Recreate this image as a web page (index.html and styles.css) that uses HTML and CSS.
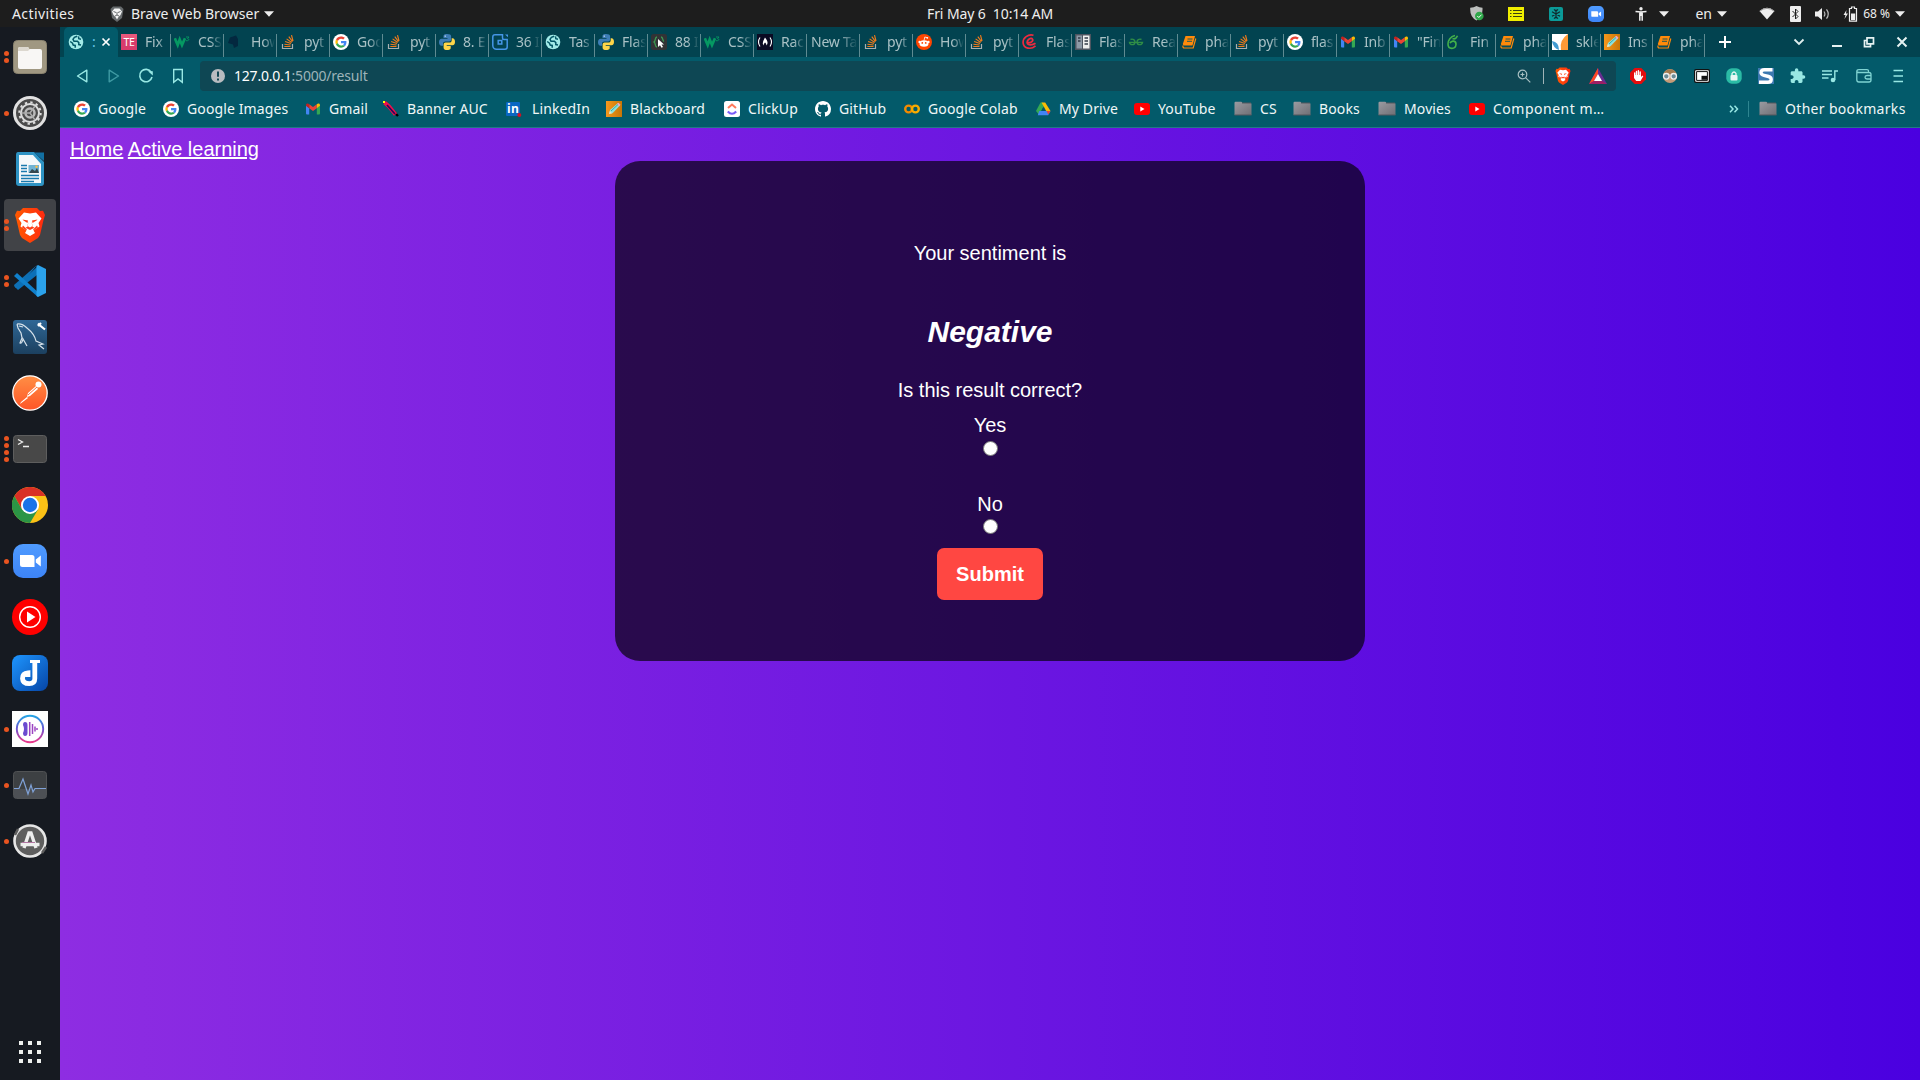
FILE: index.html
```html
<!DOCTYPE html>
<html lang="en">
<head>
<meta charset="utf-8">
<title>Sentiment result</title>
<link rel="stylesheet" href="styles.css">
</head>
<body>
<svg class="sprite" aria-hidden="true">
  <defs>
    <linearGradient id="gBrave" x1="0" x2="1"><stop offset="0" stop-color="#ff5a00"/><stop offset="1" stop-color="#ff2a10"/></linearGradient>
    <linearGradient id="gZoom" x1="0" x2="0" y1="0" y2="1"><stop offset="0" stop-color="#4f9bff"/><stop offset="1" stop-color="#3d84f7"/></linearGradient>
    <linearGradient id="gPost" x1="0" x2="0" y1="0" y2="1"><stop offset="0" stop-color="#ff8f45"/><stop offset="1" stop-color="#ff5527"/></linearGradient>
    <linearGradient id="gJop" x1="0" x2="1" y1="0" y2="1"><stop offset="0" stop-color="#1e96ff"/><stop offset="1" stop-color="#0645a6"/></linearGradient>
    <linearGradient id="gSql" x1="0" x2="0" y1="0" y2="1"><stop offset="0" stop-color="#2f6796"/><stop offset="1" stop-color="#1c405f"/></linearGradient>
    <linearGradient id="gWave" x1="0" x2="0" y1="0" y2="1"><stop offset="0" stop-color="#25a5e5"/><stop offset=".5" stop-color="#6b52d0"/><stop offset="1" stop-color="#ea3a8c"/></linearGradient>
    <linearGradient id="gFolder" x1="0" x2="1" y1="0" y2="1"><stop offset="0" stop-color="#9b9ba1"/><stop offset="1" stop-color="#6f6f75"/></linearGradient>
    <linearGradient id="gPencil" x1="0" x2="1"><stop offset="0" stop-color="#f7981d"/><stop offset="1" stop-color="#c87606"/></linearGradient>
  </defs>
  <symbol id="globe" viewBox="0 0 16 16"><circle cx="8" cy="8" r="7.3" fill="#a3ebe8"/><path d="M2.2 7.5 4.5 9.2 5.2 11l2 .4v2.400" fill="none" stroke="#035766" stroke-width="1.5"/><path d="M9.2 2.2 6.4 3.4 5 5.3 6 7.3h3.4l1.400 1.300v2l2.200.4M10.500 2.400l.3 2.200 2.200.6" fill="none" stroke="#035766" stroke-width="1.500"/></symbol>
  <symbol id="google" viewBox="0 0 16 16"><circle cx="8" cy="8" r="8" fill="#fff"/><g transform="translate(2.400 2.400) scale(.235)"><path fill="#EA4335" d="M24 9.5c3.54 0 6.71 1.22 9.21 3.6l6.85-6.85C35.9 2.38 30.47 0 24 0 14.62 0 6.51 5.38 2.56 13.22l7.98 6.19C12.43 13.72 17.74 9.5 24 9.5z"/><path fill="#4285F4" d="M46.98 24.55c0-1.57-.15-3.09-.38-4.55H24v9.02h12.94c-.58 2.96-2.26 5.48-4.78 7.18l7.73 6c4.51-4.18 7.09-10.36 7.09-17.65z"/><path fill="#FBBC05" d="M10.53 28.59c-.48-1.45-.76-2.99-.76-4.59s.27-3.14.76-4.59l-7.98-6.19C.92 16.46 0 20.12 0 24c0 3.88.92 7.54 2.56 10.78l7.97-6.19z"/><path fill="#34A853" d="M24 48c6.48 0 11.93-2.13 15.89-5.81l-7.73-6c-2.15 1.45-4.92 2.3-8.16 2.3-6.26 0-11.57-4.22-13.47-9.91l-7.98 6.19C6.51 42.62 14.62 48 24 48z"/></g></symbol>
  <symbol id="te" viewBox="0 0 16 16"><path fill="#d93c6c" d="M0 0h16v16H0z"/><path fill="#e8577c" d="M0 0h16v5H0z"/><text x="8" y="12.2" text-anchor="middle" class="te-text">TE</text></symbol>
  <symbol id="w3" viewBox="0 0 16 16"><path d="M.8 4.200 3.700 11 5.700 5.500 8 11l3-6.800" fill="none" stroke="#059862" stroke-width="2.700"/><path d="M12 3h3l-1.500 1.700c2 0 1.800 2.500-1.500 2" fill="none" stroke="#059862" stroke-width=".9"/></symbol>
  <symbol id="darkbook" viewBox="0 0 16 16"><path d="M3 3.500 9 1.500 11 5 11 12 7 14 6 10.500 1 9z" fill="#03283f"/></symbol>
  <symbol id="so" viewBox="0 0 16 16"><path d="M2.500 10v4.500h10V10" fill="none" stroke="#a7afb1" stroke-width="1.200"/><path d="M4.300 12.500h6.200M4.400 10.200l6.200.8M5.100 7.500l5.900 2M6.600 4.900l5.100 3.600M8.800 2.700l3.700 5M11.500 1.200l1.500 5.800" stroke="#ef7b1c" stroke-width="1.150"/></symbol>
  <symbol id="py" viewBox="0 0 16 16"><path fill="#3d7db5" d="M8 0C4.800 0 4.500 1.300 4.500 2.300V4h4v.7H2.600C1 4.700 0 6 0 8.200c0 2.300 1 3.500 2.500 3.500H4V9.800c0-1.400 1-2.300 2.400-2.300h3.700c1.100 0 2-.9 2-2V2.300C12.100.8 10.700 0 8 0z"/><path fill="#ffd548" d="M8.200 16c3.200 0 3.500-1.300 3.500-2.300V12h-4v-.7h5.900c1.600 0 2.400-1.300 2.400-3.500 0-2.300-1-3.500-2.400-3.500h-.9v1.900c0 1.400-1 2.300-2.400 2.300H6.600c-1.100 0-2 .9-2 2v3.200c0 1.500 1.200 2.300 3.600 2.300z"/><circle cx="6.200" cy="2.100" r=".7" fill="#fff"/></symbol>
  <symbol id="bluesq" viewBox="0 0 16 16"><path d="M10.500.8H3A2.200 2.200 0 0 0 .8 3v8.500A3.700 3.700 0 0 0 4.500 15.200H13a2.200 2.200 0 0 0 2.200-2.200V5.500H12A1.500 1.500 0 0 1 10.500 4zM6.200 6.500h3.600v3.600H6.200z" fill="none" stroke="#4596e6" stroke-width="1.500"/><path d="M13 .5h3v2.700z" fill="#4596e6"/></symbol>
  <symbol id="brace" viewBox="0 0 16 16"><rect width="16" height="16" rx="2.500" fill="#333335"/><path d="M6 3C3.500 3 5 7 3 8c2 1 .5 5 3 5M10 3c2.500 0 1 3.500 3 4.500" fill="none" stroke="#3d9b52" stroke-width="1.300"/><path d="M7 5v8l2-1.800 1.500 2.600 1.500-.8-1.500-2.500h2.500z" fill="#fff"/></symbol>
  <symbol id="fcc" viewBox="0 0 16 16"><path fill="#0a0a23" d="M0 0h16v16H0z"/><path d="M3 3.500q-3 4.500 0 9M13 3.500q3 4.500 0 9" fill="none" stroke="#fff" stroke-width="1.100"/><path d="M8 3.500c2.500 3 3.400 5.500 1.600 8-.3-1.300-.7-2.300-1.600-3-.8.800-1.400 1.800-1.500 3C4.800 9 6.500 6.500 8 3.500z" fill="#fff"/></symbol>
  <symbol id="reddit" viewBox="0 0 16 16"><circle cx="8" cy="8" r="8" fill="#ff4500"/><ellipse cx="8" cy="9.500" rx="4.500" ry="3.200" fill="#fff"/><circle cx="3.600" cy="7.900" r="1.200" fill="#fff"/><circle cx="12.400" cy="7.900" r="1.200" fill="#fff"/><path d="M8 6.500 8.800 3l2.300.6" fill="none" stroke="#fff" stroke-width=".8"/><circle cx="11.300" cy="3.800" r=".9" fill="#fff"/><circle cx="6.300" cy="8.900" r=".9" fill="#ff4500"/><circle cx="9.700" cy="8.900" r=".9" fill="#ff4500"/></symbol>
  <symbol id="redc" viewBox="0 0 16 16"><path d="M5 8.500c3.500.8 6.500-1.300 5.600-3.200C9.300 3 4.600 5.500 5.200 9c.7 2.500 5.300 2.300 8.300.2M11.500 1.300C6-.3.800 4 1.100 8.800c.6 6 8 7 12.400 3" fill="none" stroke="#ed2b3f" stroke-width="1.700"/></symbol>
  <symbol id="servers" viewBox="0 0 16 16"><path fill="#4d5560" d="M0 0h16v16H0z"/><path fill="#8d99a6" d="M1.500 1.500h5.500v13H1.500z"/><path fill="#eee" d="M8 1.500h6.500v13H8z"/><path d="M9.500 4h3.500M9.500 7h3.500M9.500 10h3.500M3 4h2.500M3 7h2.500" stroke="#333c48" stroke-width="1.400"/></symbol>
  <symbol id="gfg" viewBox="0 0 16 16"><path d="M2.500 5.500C5 4.500 7 6 7 8.300c-.4 3-5 3.200-5.500.1h13c-.5 3.100-5.100 2.900-5.500-.1 0-2.300 2-3.800 4.500-2.800" fill="none" stroke="#2f8d46" stroke-width="1.400"/></symbol>
  <symbol id="book" viewBox="0 0 16 16"><path d="M4.500 2h9.500L11.500 11.500H2.500L1.800 10z" fill="#ff8a0a"/><path d="M6.500 5h5M6 7.300h5M3 12.600h8.800" stroke="#04515f" stroke-width=".9"/><path d="M2 11.500q-.5 2.500 1.500 2.500h8.700l2.600-9.500" fill="none" stroke="#ff8a0a" stroke-width="1.200"/></symbol>
  <symbol id="gmail" viewBox="0 0 16 16"><path fill="#4285f4" d="M1 4.500 4.200 7v6.500H2q-1 0-1-1z"/><path fill="#34a853" d="M11.800 7 15 4.500v8q0 1-1 1h-2.200z"/><path fill="#ea4335" d="M4.200 3.200 8 6.100l3.800-2.900v4L8 10.100 4.200 7.200z"/><path fill="#c5221f" d="M1 4.200C1 2.500 2.700 2 4.200 3.200v4L1 4.800z"/><path fill="#fbbc04" d="M15 4.200c0-1.700-1.700-2.200-3.200-1v4L15 4.800z"/></symbol>
  <symbol id="leaf" viewBox="0 0 16 16"><path d="M9 1.500C4.500 2.500 2 6.500 2 10c0 6 7.500 5.500 8 .5C10.200 6.500 5.500 6 4 9.200M6.500 4.500c2 .8 3.800 0 5-2.800" fill="none" stroke="#43b04a" stroke-width="1.600"/></symbol>
  <symbol id="skl" viewBox="0 0 16 16"><path fill="#fff" d="M0 0h16v16H0z"/><path d="M16 0v16H9Q7 6 16 0z" fill="#ff9a36"/><path d="M0 7q7 1 7 9Q1 14 0 7z" fill="#3f9bd2"/></symbol>
  <symbol id="pencil" viewBox="0 0 16 16"><path fill="url(#gPencil)" d="M0 0h16v16H0z"/><path d="m3 13 1-4 8-7 2.200 2.300-7.700 8z" fill="#8de2dc"/><path d="m3 13 .8-3 2.200 2.200z" fill="#f7e3c0"/><path d="m11 3 1.500-1.300 2 2L13 5.300z" fill="#f7a0b8"/><path d="m5 10 7-6.500" stroke="#37a9ae"/></symbol>
  <symbol id="banner" viewBox="0 0 16 16"><path d="m1 1 14 14" stroke="#000" stroke-width="2.400"/><path d="m1.500 1.500 4.500 4 6.500 8" fill="none" stroke="#f0104a" stroke-width="4"/><path d="m4 4 8 9" stroke="#28085f" stroke-width="1.700"/><path fill="#ff0" d="M0 0h2v2H0z"/></symbol>
  <symbol id="linkedin" viewBox="0 0 16 16"><rect y="1" width="14" height="14" rx="1" fill="#0a66c2"/><text x="7" y="12" text-anchor="middle" class="in-text">in</text><circle cx="13.300" cy="14" r="2" fill="#d11124"/></symbol>
  <symbol id="clickup" viewBox="0 0 16 16"><rect width="16" height="16" rx="2.500" fill="#fff"/><path d="m4 7 4-3.500L12 7" fill="none" stroke="#ff7a5c" stroke-width="2"/><path d="M3.800 10.500q4.200 4.500 8.400 0" fill="none" stroke="#7a5cf8" stroke-width="2.100"/></symbol>
  <symbol id="github" viewBox="0 0 16 16"><path fill="#fff" d="M8 0C3.580 0 0 3.580 0 8c0 3.540 2.290 6.530 5.470 7.590.4.070.55-.17.55-.38 0-.19-.01-.82-.01-1.490-2.010.37-2.530-.49-2.690-.94-.09-.23-.48-.94-.82-1.130-.28-.15-.68-.52-.01-.53.63-.01 1.080.58 1.230.82.72 1.210 1.870.87 2.330.66.070-.52.28-.87.51-1.070-1.780-.2-3.640-.89-3.640-3.950 0-.87.31-1.590.82-2.150-.08-.2-.36-1.020.08-2.120 0 0 .67-.21 2.200.82.64-.18 1.320-.27 2-.27s1.360.09 2 .27c1.530-1.040 2.200-.82 2.200-.82.44 1.100.16 1.920.08 2.120.51.56.82 1.270.82 2.150 0 3.070-1.870 3.750-3.650 3.950.29.25.54.73.54 1.480 0 1.070-.01 1.930-.01 2.200 0 .21.15.46.55.38A8.010 8.010 0 0 0 16 8c0-4.420-3.580-8-8-8z"/></symbol>
  <symbol id="colab" viewBox="0 0 16 16"><circle cx="4.600" cy="8" r="3.400" fill="none" stroke="#f28a00" stroke-width="2.400"/><circle cx="11.400" cy="8" r="3.400" fill="none" stroke="#f9ab00" stroke-width="2.400"/></symbol>
  <symbol id="drive" viewBox="0 0 16 16"><path fill="#34a853" d="M5.500 1.500h2.700L9.500 4 4.200 14 1 10z"/><path fill="#fbbc04" d="M6.500 1.500h3.700L15.500 10h-4.300z"/><path fill="#4285f4" d="M4.200 10h11.300l-2.300 4.300H2.800z"/><path fill="#035766" d="m8 6.500 1.900 3.500H6.200z"/><path fill="#ea4335" d="M11.500 10h4l-2.200 3.500z"/></symbol>
  <symbol id="yt" viewBox="0 0 16 16"><rect y="2" width="16" height="12" rx="3" fill="#f00"/><path d="m6.300 5.500 4.200 2.500-4.200 2.500z" fill="#fff"/></symbol>
  <symbol id="folder" viewBox="0 0 18 16"><path d="M.5 2q0-1.300 1-1.300H7q1 0 1.300 1.300h8q1.200 0 1.200 1v11H.5z" fill="url(#gFolder)"/><path d="M.5 14h17M8 2h9" stroke="#55565d" fill="none"/></symbol>
  <symbol id="lion" viewBox="0 0 30 36"><path d="M8 1h14l3 3 3-.3L30 8l-1.500 5L25 28l-2 3-8 5-8-5-2-3L1.500 13 0 8l2-4.300L5 4z" fill="url(#gBrave)"/><path d="M15 6.500 21 5.500 26.500 11.500 23.500 16 24.500 19.500 18.500 23.500 20 26 15 29 10 26 11.500 23.500 5.500 19.500 6.500 16 3.500 11.500 9 5.500z" fill="#fff"/><path d="m7.500 12.500 5.500 1-.5 2.500-4-2.500zM22.500 12.500l-5.500 1 .5 2.500 4-2.500zM13.500 14l-1 5L15 20.500l2.500-1.500-1-5 .8 5.500 2.200 1.200L15 23l-4.500-2.300 2.200-1.200zM8 18.500l4 4-1 .8L7 20.500zM22 18.500l-4 4 1 .8 4-2.800z" fill="#ff4018"/></symbol>
  <symbol id="zoomapp" viewBox="0 0 34 34"><rect width="34" height="34" rx="10" fill="url(#gZoom)"/><path d="M7 11h12q2.500 0 2.500 2.500V23h-12Q7 23 7 20.500zM22.800 15.500l5-4v11l-5-4z" fill="#fff"/></symbol>
  <symbol id="caret" viewBox="0 0 10 6"><path d="M0 .3h10L5 5.700z" fill="#eee"/></symbol>
</svg>

<header class="topbar">
  <span class="activities">Activities</span>
  <svg class="app-icon" viewBox="0 0 14 16"><path d="M3 .5h8L13.500 3 12 12l-5 4-5-4L.5 3z" fill="#666a6c"/><path d="M4.500 2.500h5L12 5.500 10.500 9 8.500 11 7 13.500 5.500 11 3.500 9 2 5.500z" fill="#f4f4f4"/><path d="m3.500 5.500 2.500 1M10.500 5.500l-2.500 1M7 6v3M5 10l2-1 2 1" stroke="#666a6c" fill="none"/></svg>
  <span class="app-name">Brave Web Browser</span>
  <svg class="caret"><use href="#caret"/></svg>
  <time class="clock">Fri May 6&nbsp; 10:14 AM</time>
  <div class="tray">
    <svg width="14" height="16" viewBox="0 0 14 16"><path d="M6.500 0q3 1.800 6 1.800.5 9.500-6 12.700Q-.3 11.300.2 1.800 4 1.800 6.500 0z" fill="#bcbfbd"/><circle cx="9.300" cy="10" r="4.300" fill="#2fa84a"/><path d="m7.300 10 1.500 1.500 2.700-2.800" stroke="#fff" fill="none"/></svg>
    <svg width="16" height="14" viewBox="0 0 16 14"><path fill="#f0ee00" d="M0 0h16v14H0z"/><path d="M2 3.500h1.500M5 3.500h9M2 6.500h1.500M5 6.500h9M2 9.500h1.500M5 9.500h9" stroke="#3c3c10"/></svg>
    <svg width="14" height="14" viewBox="0 0 14 14"><rect width="14" height="14" rx="2" fill="#0b9a98"/><path d="M7 2.500v9M3 4.700l8 4.600M3 9.300l8-4.600M5 2.300l2 2 2-2M5 11.700l2-2 2 2" stroke="#10272b" stroke-width="1.100" fill="none"/></svg>
    <svg width="16" height="16"><use href="#zoomapp"/></svg>
    <svg width="12" height="14" viewBox="0 0 12 14"><circle cx="6" cy="1.700" r="1.700" fill="#eee"/><path d="M.5 4.500 6 5l5.500-.5M4.800 4.500v9.300M7.200 4.500v9.300M6 4.500V9" stroke="#eee" stroke-width="1.500" fill="none"/></svg>
    <svg width="10" height="6"><use href="#caret"/></svg>
    <span>en</span>
    <svg width="10" height="6"><use href="#caret"/></svg>
    <svg width="16" height="13" viewBox="0 0 16 13"><path d="M.5 4Q8-2.500 15.500 4L8 12.500z" fill="#eee"/><path d="M.8 4.200Q8-1.500 15.200 4.200" stroke="#999" fill="none"/></svg>
    <svg width="11" height="16" viewBox="0 0 11 16"><rect width="11" height="16" rx="1" fill="#eee"/><path d="m2.500 5 5.500 5.500-2.500 2.500V3L8 5.500 2.500 11" stroke="#1d1d1d" fill="none"/></svg>
    <svg width="15" height="14" viewBox="0 0 15 14"><path d="M0 4.500h3l4-3.500v12L3 9.500H0z" fill="#eee"/><path d="M9 4.500q1.800 2.500 0 5M11.500 2.300q3.500 4.700 0 9.400" stroke="#bbb" fill="none" stroke-width="1.200"/></svg>
    <svg width="15" height="16" viewBox="0 0 15 16"><path d="M3.500 4 .5 9h2L1.500 13 5 7.500H3z" fill="#eee"/><path d="M6.500 2.500h2V1h3v1.500h2v12.700h-7z" fill="none" stroke="#eee" stroke-width="1.200"/><path d="M8 7.500h4.200V14H8z" fill="#eee"/></svg>
    <span class="percent">68 %</span>
    <svg width="10" height="6"><use href="#caret"/></svg>
  </div>
</header>

<div class="desktop">
  <nav class="dock">
    <div class="dock-item"><span class="dots"><i></i><i></i></span>
      <svg viewBox="0 0 36 36"><rect x="1.500" y="1.500" width="33" height="33" rx="4" fill="#a09882" stroke="#8a836f"/><path d="M6 10q0-2 2-2h7q2 0 2 2h11q2 0 2 2v16q0 2-2 2H8q-2 0-2-2z" fill="#f8f7f5"/><path d="M6 12h10l2-2-1-.300Q17 8 15 8H8Q6 8 6 10z" fill="#dcd8cf"/></svg></div>
    <div class="dock-item"><span class="dots"><i></i></span>
      <svg viewBox="0 0 36 36"><circle cx="18" cy="18" r="15.500" fill="#4b4b4b" stroke="#e1e1e1" stroke-width="3"/><circle cx="18" cy="18" r="9" fill="none" stroke="#ddd" stroke-width="2"/><circle cx="18" cy="18" r="10.700" fill="none" stroke="#ddd" stroke-width="2" stroke-dasharray="2.400 3.200"/><circle cx="18" cy="18" r="4.500" fill="none" stroke="#bbb" stroke-width="2.500"/><path d="M18 18H9.500M18 18l5-7M18 18l5 7" stroke="#aaa" stroke-width="1.500"/></svg></div>
    <div class="dock-item">
      <svg viewBox="0 0 36 36"><path d="M6 1h16l10 10v21q0 3-3 3H7q-3 0-3-3V4q0-3 2-3z" fill="#2e93c4"/><path d="M7 4h14l8 9v19H7z" fill="#f4f8fa"/><path d="M22 1.500h10V10z" fill="#1270a3"/><path d="M9 14.500h6M9 17.500h6M9 20.500h6M9 24.500h18M9 27.500h18M9 30.500h13" stroke="#197aae" stroke-width="1.300"/><path d="M16.500 14h10.500v8H16.500z" fill="#70b3d3"/><path d="m17 22 3-4 3 2 2-3 2 5z" fill="#35474f"/><circle cx="24.500" cy="15.800" r="1.200" fill="#ffbd42"/></svg></div>
    <div class="dock-item active"><span class="dots"><i></i><i></i></span>
      <svg viewBox="0 0 30 36"><use href="#lion"/></svg></div>
    <div class="dock-item"><span class="dots"><i></i><i></i></span>
      <svg viewBox="0 0 36 36"><path d="m3 24 3 3 19-15V4z" fill="#0b70b8"/><path d="m25 2-9 11L4 25q-2-1-2-3L25 2z" fill="#0f6fb3"/><path d="m5 10 22 20-1 4L2 13z" fill="#1080cc"/><path d="m26 2 8 4v24l-8 4-1.500-1V3z" fill="#2ba2ec"/></svg></div>
    <div class="dock-item">
      <svg viewBox="0 0 36 36"><rect x="1" y="1" width="34" height="34" rx="3" fill="url(#gSql)"/><path d="M5 5q5-1 10 4c5 4 8 8 9 13l7 3-4 1 5 4M5 5l1 4 3 5 1 5-2 5q2 1 3-4l4 7M7 7l4 1" fill="none" stroke="#d7e2ea" stroke-width="1.200"/><path d="m26 4.500 2 2 5 4M26 7l3-3" fill="none" stroke="#fff" stroke-width="2.200"/></svg></div>
    <div class="dock-item">
      <svg viewBox="0 0 36 36"><circle cx="18" cy="18" r="17.200" fill="url(#gPost)" stroke="#fff" stroke-width="1.300"/><circle cx="26.500" cy="9.500" r="3" fill="#fff"/><path d="m24 11-8 7-1 4 3-1 8-7zM15 22l-6 5-1 2 8-6" fill="#fff"/><path d="m16 20 9-8" stroke="#ff7038"/></svg></div>
    <div class="dock-item"><span class="dots"><i></i><i></i><i></i><i></i></span>
      <svg viewBox="0 0 36 36"><rect x="1.500" y="4.500" width="33" height="27" rx="3" fill="#484848" stroke="#5e5e5e"/><path d="m6 8.500 4.500 2.500L6 13.500M11 15.500h6" fill="none" stroke="#eee" stroke-width="1.300"/></svg></div>
    <div class="dock-item">
      <svg viewBox="0 0 36 36"><circle cx="18" cy="18" r="18" fill="#fbc116"/><path d="M2.400 9A18 18 0 0 1 33.600 9H18l-8 13.500z" fill="#d93025"/><path d="M2.400 9A18 18 0 0 0 18 36l8-13.500H10z" fill="#2b9545"/><circle cx="18" cy="18" r="9" fill="#fff"/><circle cx="18" cy="18" r="7.200" fill="#1a73e8"/></svg></div>
    <div class="dock-item"><span class="dots"><i></i></span>
      <svg viewBox="-1 -1 36 36"><use href="#zoomapp" width="34" height="34"/></svg></div>
    <div class="dock-item">
      <svg viewBox="0 0 36 36"><circle cx="18" cy="18" r="18" fill="#f00"/><circle cx="18" cy="18" r="10.300" fill="none" stroke="#fff" stroke-width="1.400"/><path d="m15 12.500 8.500 5.500-8.500 5.500z" fill="#fff"/></svg></div>
    <div class="dock-item">
      <svg viewBox="0 0 36 36"><rect width="36" height="36" rx="8" fill="url(#gJop)"/><path d="M18 6.500h10" stroke="#fff" stroke-width="3"/><path d="M22.800 6v17.500q0 5.200-5.500 5.200-6.500 0-6.800-5.200 0-5 5.500-5.500v4" fill="none" stroke="#fff" stroke-width="4.800"/></svg></div>
    <div class="dock-item"><span class="dots"><i></i></span>
      <svg viewBox="0 0 36 36"><path fill="#fff" d="M0 0h36v36H0z"/><circle cx="18" cy="18" r="13.200" fill="none" stroke="url(#gWave)" stroke-width="1.900"/><path d="M13 11q2.500 0 2.500 3v8q0 3-2.500 3-2 0-2-3 2-4 0-8 0-3 2-3z" fill="#6b4bd0"/><path d="M17.700 11v14M20.500 13v10M23 15.500v5M25 17v2" stroke="#9b45c2" stroke-width="1.500"/></svg></div>
    <div class="dock-item"><span class="dots"><i></i></span>
      <svg viewBox="0 0 36 36"><rect x="1.500" y="4.500" width="33" height="27" rx="3" fill="#3d4043" stroke="#505254"/><path d="M2 22h32v9H2z" fill="#4d5055"/><path d="M2 21.500h5l4-9.500 5 15 3-9 2 7 2-3.500h11" fill="none" stroke="#7fa1d7" stroke-width="1.200"/></svg></div>
    <div class="dock-item"><span class="dots"><i></i></span>
      <svg viewBox="0 0 36 36"><circle cx="18" cy="18" r="15.500" fill="#5e5e5e" stroke="#e6e6e6" stroke-width="2.600"/><path d="m12 25 5-15h2l5 15" fill="none" stroke="#eee" stroke-width="3.400"/><path d="M8.500 21.500h19" stroke="#eee" stroke-width="3.500"/><path d="M10 19.500h13" stroke="#b277a4"/><path d="m3 12 3-6M30 30l4-6" stroke="#5e5e5e" stroke-width="2.500"/></svg></div>
    <svg class="apps" viewBox="0 0 24 24"><path d="M1 3h4M10 3h4M19 3h4M1 12h4M10 12h4M19 12h4M1 21h4M10 21h4M19 21h4" stroke="#eef0ee" stroke-width="4"/></svg>
  </nav>

  <section class="browser">
    <div class="tabs">
      <div class="tab current"><svg><use href="#globe"/></svg><span>:</span><svg class="close" viewBox="0 0 10 10"><path d="m1.500 1.500 7 7M8.500 1.500l-7 7" stroke="#fff" stroke-width="1.700"/></svg></div>
      <div class="tab"><svg><use href="#te"/></svg><span>Fix</span></div>
      <div class="tab"><svg><use href="#w3"/></svg><span>CSS</span></div>
      <div class="tab"><svg><use href="#darkbook"/></svg><span>How</span></div>
      <div class="tab"><svg><use href="#so"/></svg><span>pyt</span></div>
      <div class="tab"><svg><use href="#google"/></svg><span>Goo</span></div>
      <div class="tab"><svg><use href="#so"/></svg><span>pyt</span></div>
      <div class="tab"><svg><use href="#py"/></svg><span>8. E</span></div>
      <div class="tab"><svg><use href="#bluesq"/></svg><span>36 I</span></div>
      <div class="tab"><svg><use href="#globe"/></svg><span>Tas</span></div>
      <div class="tab"><svg><use href="#py"/></svg><span>Flas</span></div>
      <div class="tab"><svg><use href="#brace"/></svg><span>88 I</span></div>
      <div class="tab"><svg><use href="#w3"/></svg><span>CSS</span></div>
      <div class="tab"><svg><use href="#fcc"/></svg><span>Rac</span></div>
      <div class="tab"><span class="wide">New Ta</span></div>
      <div class="tab"><svg><use href="#so"/></svg><span>pyt</span></div>
      <div class="tab"><svg><use href="#reddit"/></svg><span>How</span></div>
      <div class="tab"><svg><use href="#so"/></svg><span>pyt</span></div>
      <div class="tab"><svg><use href="#redc"/></svg><span>Flas</span></div>
      <div class="tab"><svg><use href="#servers"/></svg><span>Flas</span></div>
      <div class="tab"><svg><use href="#gfg"/></svg><span>Rea</span></div>
      <div class="tab"><svg><use href="#book"/></svg><span>pha</span></div>
      <div class="tab"><svg><use href="#so"/></svg><span>pyt</span></div>
      <div class="tab"><svg><use href="#google"/></svg><span>flas</span></div>
      <div class="tab"><svg><use href="#gmail"/></svg><span>Inb</span></div>
      <div class="tab"><svg><use href="#gmail"/></svg><span>"Fin</span></div>
      <div class="tab"><svg><use href="#leaf"/></svg><span>Fin</span></div>
      <div class="tab"><svg><use href="#book"/></svg><span>pha</span></div>
      <div class="tab narrow"><svg><use href="#skl"/></svg><span>skle</span></div>
      <div class="tab narrow"><svg><use href="#pencil"/></svg><span>Ins</span></div>
      <div class="tab narrow"><svg><use href="#book"/></svg><span>pha</span></div>
      <svg class="newtab" viewBox="0 0 12 12"><path d="M6 0v12M0 6h12" stroke="#fff" stroke-width="2"/></svg>
      <div class="controls">
        <svg viewBox="0 0 12 12"><path d="m1.500 3.500 4.500 4.500 4.500-4.500" fill="none" stroke="#e0eeee" stroke-width="1.800"/></svg>
        <svg viewBox="0 0 12 12"><path d="M1 10h10" stroke="#e6f2f2" stroke-width="2"/></svg>
        <svg viewBox="0 0 12 12"><path d="M4 1.800h6.500v6H4zM4 4.500H1.500v6.200h6V8" fill="none" stroke="#e6f2f2" stroke-width="1.700"/></svg>
        <svg viewBox="0 0 12 12"><path d="m1.500 1.500 9 9M10.500 1.500l-9 9" stroke="#e6f2f2" stroke-width="2"/></svg>
      </div>
    </div>

    <div class="toolbar">
      <div class="nav">
        <svg viewBox="0 0 16 16"><path d="M12.800 2.200v11.600L3.500 8z" fill="none" stroke="#98e8e4" stroke-width="1.400" stroke-linejoin="round"/></svg>
        <svg viewBox="0 0 16 16"><path d="M3.200 2.200v11.600L12.500 8z" fill="none" stroke="#3f9aa3" stroke-width="1.400" stroke-linejoin="round"/></svg>
        <svg viewBox="0 0 16 16"><path d="M13.200 4.200A6.200 6.200 0 1 0 14 9" fill="none" stroke="#98e8e4" stroke-width="1.600"/><path d="M10 3.200h4.800V7.500z" fill="#98e8e4"/></svg>
        <svg viewBox="0 0 16 16"><path d="M3.700 1.500h8.600v12.800L8 11l-4.300 3.300z" fill="none" stroke="#98e8e4" stroke-width="1.400"/></svg>
      </div>
      <div class="address">
        <svg width="14" height="14" viewBox="0 0 14 14"><circle cx="7" cy="7" r="7" fill="#b9bcc0"/><path d="M7 2.500v5.300M7 9.500v2" stroke="#154854" stroke-width="2"/></svg>
        <span class="url"><b>127.0.0.1</b>:5000/result</span>
        <svg class="magnify" width="14" height="14" viewBox="0 0 14 14"><circle cx="5.500" cy="5.500" r="4.300" fill="none" stroke="#a7bfc2" stroke-width="1.200"/><path d="m8.800 8.800 4.500 4.500M3.500 5.500h4M5.500 3.500v4" stroke="#a7bfc2" stroke-width="1.200"/></svg>
        <span class="bar"></span>
        <svg class="shield" width="16" height="18"><use href="#lion"/></svg>
        <svg width="18" height="16" viewBox="0 0 18 16"><path d="M9 0 18 16H0z" fill="#662d91"/><path d="M9 0v6l-4 7-5 3z" fill="#ff4724"/><path d="M0 16h18l-5-3H5z" fill="#9e1f63"/><path d="m9 6 4 7H5z" fill="#fff"/></svg>
      </div>
      <div class="extensions">
        <svg viewBox="0 0 16 16"><path d="M4.700 0h6.600L16 4.700v6.600L11.300 16H4.700L0 11.300V4.700z" fill="#e40d0d"/><path d="M4.700 7.800V5M6.500 8V3.500M8.400 8V2.800M10.200 8V4" stroke="#fff" stroke-width="1.400" stroke-linecap="round"/><path d="M4 7h7v2l1.300-1.500 1 .8L10.500 13H6.200L4 10z" fill="#fff"/></svg>
        <svg viewBox="0 0 16 16"><circle cx="8" cy="8" r="7" fill="#c59b78"/><path d="M2 4.500Q8-2 14 4.500l-2 1.500H4z" fill="#a27b50"/><circle cx="4.300" cy="8.300" r="2.800" fill="#6b8b96" stroke="#eee" stroke-width="1.300"/><circle cx="11.700" cy="8.300" r="2.800" fill="#6b8b96" stroke="#eee" stroke-width="1.300"/></svg>
        <svg viewBox="0 0 16 16"><rect y="1" width="16" height="14" rx="2" fill="#111"/><rect x="1.200" y="2.200" width="13.600" height="11.600" rx="1" fill="#fff"/><path d="M2.600 3.600h10.800v8.800H2.600z" fill="none" stroke="#111"/><path d="M7.500 7.800h5.500v4H7.500z" fill="#111"/></svg>
        <svg viewBox="0 0 16 16"><rect x=".3" y=".3" width="15.400" height="15.400" rx="5.500" fill="#2bbba5"/><rect x="4.500" y="7" width="7" height="5.500" rx="1" fill="#e9f8f5"/><path d="M6 7V5.500q2-3 4 0V7" fill="none" stroke="#e9f8f5" stroke-width="1.300"/></svg>
        <svg viewBox="0 0 16 16"><path fill="#3c78b0" d="M0 0h16v16H0z"/><path d="M14.500 1.800H6.500Q3 1.800 3 4.400 3 6.500 6 7.300l4.500 1.200q2.700.8 2.700 2.900 0 2.800-3.500 2.800H1" fill="none" stroke="#fff" stroke-width="3.400"/></svg>
        <svg viewBox="1 1 23 22"><path fill="#98e8e4" d="M20.500 11H19V7c0-1.100-.9-2-2-2h-4V3.500a2.500 2.500 0 0 0-5 0V5H4c-1.100 0-1.990.9-1.990 2v3.800H3.500c1.490 0 2.700 1.210 2.700 2.700s-1.210 2.700-2.700 2.700H2V20c0 1.100.9 2 2 2h3.800v-1.500c0-1.490 1.210-2.700 2.700-2.700s2.700 1.210 2.700 2.700V22H17c1.100 0 2-.9 2-2v-4h1.500a2.500 2.500 0 0 0 0-5z"/></svg>
        <svg viewBox="0 0 16 16"><path d="M0 3h10M0 6.500h10M0 10h6.500M12.800 12V3H16" fill="none" stroke="#98e8e4" stroke-width="1.400"/><circle cx="11" cy="12" r="2.300" fill="#98e8e4"/></svg>
        <svg viewBox="0 0 16 16"><path d="M12.500 4.500V3q0-1.300-1.500-1.300H3Q.8 1.700.8 3.500v8.300q0 2.200 2.200 2.200h10q2 0 2-2V6.500q0-2-2-2H3Q1 4.500.8 3.500M15 7.500h-4q-2 .2-2 1.700t2 1.800h4" fill="none" stroke="#7fd3d2" stroke-width="1.300"/></svg>
        <svg viewBox="0 0 16 16"><path d="M3.500 2.500h9.500M3.500 8h9.500M3.500 13.500h9.500" stroke="#98e8e4" stroke-width="1.400"/></svg>
      </div>
    </div>

    <div class="bookmarks">
      <a><svg><use href="#google"/></svg>Google</a>
      <a><svg><use href="#google"/></svg>Google Images</a>
      <a><svg><use href="#gmail"/></svg>Gmail</a>
      <a><svg><use href="#banner"/></svg>Banner AUC</a>
      <a class="linkedin"><svg><use href="#linkedin"/></svg>LinkedIn</a>
      <a><svg><use href="#pencil"/></svg>Blackboard</a>
      <a><svg><use href="#clickup"/></svg>ClickUp</a>
      <a><svg><use href="#github"/></svg>GitHub</a>
      <a><svg><use href="#colab"/></svg>Google Colab</a>
      <a><svg><use href="#drive"/></svg>My Drive</a>
      <a><svg><use href="#yt"/></svg>YouTube</a>
      <a class="dir"><svg><use href="#folder"/></svg>CS</a>
      <a class="dir"><svg><use href="#folder"/></svg>Books</a>
      <a class="dir"><svg><use href="#folder"/></svg>Movies</a>
      <a class="long"><svg><use href="#yt"/></svg>Component m…</a>
      <svg class="more" viewBox="0 0 10 8"><path d="m1 .8 3 3.200-3 3.200M5.500.8l3 3.200-3 3.200" fill="none" stroke="#98e8e4" stroke-width="1.500"/></svg>
      <a class="dir other"><svg><use href="#folder"/></svg>Other bookmarks</a>
    </div>

    <main class="page">
      <div class="links"><a href="#">Home</a> <a href="#">Active learning</a></div>
      <form class="card">
        <p class="lead">Your sentiment is</p>
        <h2>Negative</h2>
        <p class="question">Is this result correct?</p>
        <label class="yes">Yes<input type="radio" name="correct"></label>
        <label class="no">No<input type="radio" name="correct"></label>
        <button type="button">Submit</button>
      </form>
    </main>
  </section>
</div>
</body>
</html>
```
FILE: styles.css
```css
* { box-sizing: border-box; }
body { margin: 0; width: 1920px; height: 1080px; overflow: hidden; display: flex; flex-direction: column; font: 14px/20px "Noto Sans", "Open Sans", sans-serif; color: #eee; }
svg { flex: none; display: block; }
.sprite { position: absolute; width: 0; height: 0; }
.te-text { font: 10.5px "Noto Sans", sans-serif; fill: #fff; letter-spacing: -.3px; }
.in-text { font: bold 12px "Open Sans", sans-serif; fill: #fff; }

.topbar { height: 27px; flex: none; background: #1d1d1d; display: grid; grid-template-columns: 98px 33px 133px 663px 533px 1fr; align-items: center; white-space: nowrap; }
.activities { padding-left: 12px; letter-spacing: .4px; }
.app-icon { width: 14px; height: 16px; margin-left: 12px; }
.caret { width: 10px; height: 6px; }
.clock { letter-spacing: -.1px; }
.tray { display: grid; grid-template-columns: 24px 40px 39px 41px 43px 22px 43px 15px 48px 26px 29px 28px 32px 15px; justify-items: end; align-items: center; }
.percent { font-size: 12px; }

.desktop { flex: 1; display: flex; min-height: 0; }
.dock { width: 60px; background: #161a21; display: flex; flex-direction: column; align-items: center; gap: 4px; padding: 4px 0 16px; }
.dock-item { width: 52px; height: 52px; border-radius: 4px; position: relative; display: flex; align-items: center; justify-content: center; }
.dock-item > svg { width: 36px; height: 36px; }
.dock-item.active { background: #414347; }
.dots { position: absolute; left: 0; top: 0; bottom: 0; display: flex; flex-direction: column; justify-content: center; gap: 2px; }
.dots i { width: 5px; height: 5px; border-radius: 50%; background: #e95420; }
.apps { width: 24px; height: 24px; margin-top: auto; }

.browser { flex: 1; min-width: 0; display: flex; flex-direction: column; background: #035a6a; }
.tabs { height: 30px; flex: none; background: #024350; display: flex; align-items: center; padding-left: 4px; }
.tab { width: 53px; height: 30px; flex: none; padding: 0 2px 0 3px; display: flex; align-items: center; gap: 8px; color: #a9c1c5; background: linear-gradient(#5f8b92, #5f8b92) right bottom / 1px 23px no-repeat; }
.tab svg { width: 16px; height: 16px; }
.tab span { flex: 1; min-width: 0; overflow: hidden; white-space: nowrap; letter-spacing: -.2px; -webkit-mask-image: linear-gradient(90deg, #000 52%, transparent); mask-image: linear-gradient(90deg, #000 52%, transparent); }
.tab .wide { padding-left: 1px; -webkit-mask-image: linear-gradient(90deg, #000 60%, transparent); mask-image: linear-gradient(90deg, #000 60%, transparent); }
.tab.narrow { width: 52px; }
.tab.current { width: 54px; background: #035a6a; border-radius: 5px 5px 0 0; padding-left: 4px; }
.tab.current span { flex: 0 0 5px; color: #65c7e8; overflow: visible; -webkit-mask-image: none; mask-image: none; }
.tab.current .close { width: 10px; height: 10px; margin-left: -4px; }
.newtab { width: 12px; height: 12px; margin-left: 14px; }
.controls { margin-left: auto; display: grid; grid-template-columns: 38px 32px 33px 12px; padding-right: 12px; }
.controls svg { width: 12px; height: 12px; }

.toolbar { height: 38px; flex: none; display: flex; align-items: center; }
.nav { width: 140px; padding-left: 14px; display: flex; gap: 16px; }
.nav svg { width: 16px; height: 16px; }
.address { width: 1416px; height: 30px; border-radius: 4px; background: #0e4754; padding: 0 9px 0 11px; display: flex; align-items: center; }
.url { margin-left: 9px; color: #9db4b9; letter-spacing: -.2px; }
.url b { font-weight: 400; color: #fff; }
.magnify { margin-left: auto; }
.bar { width: 1px; height: 16px; background: #9fb3b7; margin: 0 11px 0 12px; }
.shield { margin-right: 18px; }
.extensions { display: grid; grid-template-columns: repeat(6, 32px) 34px 34px 16px; padding-left: 14px; }
.extensions svg { width: 16px; height: 16px; }

.bookmarks { height: 33px; flex: none; border-bottom: 1px solid #227887; padding: 0 0 5px 14px; display: grid; grid-template-columns: 89px 142px 78px 123px 100px 118px 91px 89px 131px 99px 100px 59px 85px 91px 260px 19px 1fr; align-items: center; white-space: nowrap; }
.bookmarks a { display: flex; align-items: center; gap: 8px; color: #f0f7f7; letter-spacing: .12px; }
.bookmarks a svg { width: 16px; height: 16px; }
.bookmarks .linkedin { gap: 10px; }
.bookmarks .dir svg { width: 18px; }
.bookmarks .long { letter-spacing: .5px; }
.more { width: 10px; height: 8px; }
.bookmarks .other { border-left: 1px solid #2f8590; padding-left: 10px; height: 16px; letter-spacing: .32px; }

.page { flex: 1; padding: 10px; background: linear-gradient(to right, #8e2de2, #4a00e0); font: 20px/23px "Liberation Sans", Arial, sans-serif; color: #fff; }
.links a { color: #fff; }
.card { width: 750px; height: 500px; margin: 0 auto; border-radius: 25px; background: rgba(0, 0, 0, .66); display: flex; flex-direction: column; align-items: center; padding-top: 81px; }
.card p { margin: 0; }
.card h2 { margin: 50px 0 30px; font-size: 30px; line-height: 34px; font-style: italic; }
.card label { display: flex; flex-direction: column; align-items: center; }
.yes { margin-top: 12px; }
.no { margin-top: 37px; }
.card input { appearance: none; width: 15px; height: 15px; margin: 4px 0 0 1px; border: 1px solid #767676; border-radius: 50%; background: #fff; }
.no input { margin-top: 3px; }
.card button { width: 106px; height: 52px; margin-top: 14px; padding: 0; border: 0; border-radius: 7px; background: #ff4742; color: #fff; font: bold 20px/23px "Liberation Sans", Arial, sans-serif; }
```
